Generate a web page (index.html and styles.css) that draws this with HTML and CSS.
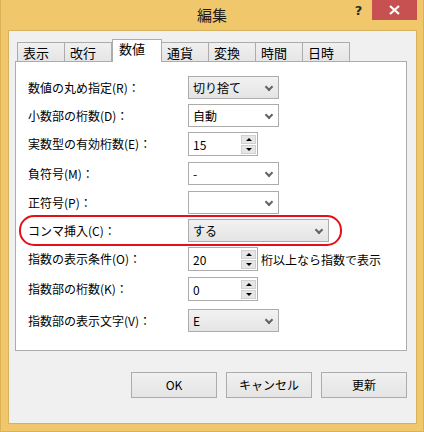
FILE: index.html
```html
<!DOCTYPE html>
<html>
<head>
    <title>編集</title>
    <link rel="stylesheet" href="styles.css">
</head>
<body>
    <div class="window">
        <div class="titlebar">
            <div></div>
            <div class="title">編集</div>
            <div class="caption-buttons">
                <div class="help">?</div>
                <div class="close">
                    <svg width="11" height="10" viewBox="0 0 11 10"><path d="M1 1 L10 9 M10 1 L1 9" stroke="#fff" stroke-width="2.2" fill="none"/></svg>
                </div>
            </div>
        </div>
        <div class="client">
            <div class="tabs">
                <div class="tab first">表示</div>
                <div class="tab">改行</div>
                <div class="tab selected">数値</div>
                <div class="tab">通貨</div>
                <div class="tab">変換</div>
                <div class="tab">時間</div>
                <div class="tab">日時</div>
            </div>
            <div class="panel">
                <div class="form">
                    <div class="label">数値の丸め指定(R)：</div>
                    <div class="combo gray">切り捨て<span class="chevron"></span></div>

                    <div class="label">小数部の桁数(D)：</div>
                    <div class="combo">自動<span class="chevron"></span></div>

                    <div class="label tall">実数型の有効桁数(E)：</div>
                    <div class="spin"><span class="value">15</span><span class="spin-btns"><span class="up"></span><span class="down"></span></span></div>

                    <div class="label">負符号(M)：</div>
                    <div class="combo">-<span class="chevron"></span></div>

                    <div class="label">正符号(P)：</div>
                    <div class="combo"><span class="chevron"></span></div>

                    <div class="label">コンマ挿入(C)：</div>
                    <div class="cell-mark">
                        <div class="combo gray wide">する<span class="chevron"></span></div>
                        <div class="mark"></div>
                    </div>

                    <div class="label tall">指数の表示条件(O)：</div>
                    <div class="inline">
                        <div class="spin"><span class="value">20</span><span class="spin-btns"><span class="up"></span><span class="down"></span></span></div>
                        <span class="suffix">桁以上なら指数で表示</span>
                    </div>

                    <div class="label tall">指数部の桁数(K)：</div>
                    <div class="spin"><span class="value">0</span><span class="spin-btns"><span class="up"></span><span class="down"></span></span></div>

                    <div class="label">指数部の表示文字(V)：</div>
                    <div class="combo gray">E<span class="chevron"></span></div>
                </div>
            </div>
            <div class="buttons">
                <div class="button">OK</div>
                <div class="button">キャンセル</div>
                <div class="button">更新</div>
            </div>
        </div>
    </div>
</body>
</html>
```

FILE: styles.css
```css
body {
    margin: 0;
    padding: 0;
    font-family: "Noto Sans CJK JP", "Noto Sans", sans-serif;
    font-size: 12px;
    color: #000;
}
.window {
    width: 424px;
    height: 432px;
    box-sizing: border-box;
    background: #f0c86b;
    border: 1px solid #dcb153;
    border-top: none;
    display: flex;
    flex-direction: column;
}
.titlebar {
    height: 30px;
    display: grid;
    grid-template-columns: 1fr auto 1fr;
}
.title {
    font-size: 15px;
    line-height: 30px;
    color: #1a1a1a;
}
.caption-buttons {
    display: flex;
    justify-content: flex-end;
    align-items: flex-start;
    margin-right: 6px;
}
.help {
    width: 27px;
    height: 20px;
    text-align: center;
    font-family: "DejaVu Sans", sans-serif;
    font-weight: bold;
    font-size: 13px;
    line-height: 22px;
    color: #2b2b2b;
}
.close {
    width: 45px;
    height: 20px;
    background: #c75050;
    display: flex;
    align-items: center;
    justify-content: center;
}
.client {
    flex: 1;
    margin: 0 6px 7px 7px;
    background: #f0f0f0;
    border: 1px solid #d8b35e;
    padding: 8px 0 0 6px;
}
.tabs {
    display: flex;
    align-items: flex-end;
    margin-left: 2px;
    height: 22px;
}
.tab {
    width: 47px;
    height: 19px;
    box-sizing: border-box;
    border: 1px solid #acacac;
    border-bottom: none;
    border-left: none;
    background: linear-gradient(#f0f0f0, #e5e5e5);
    padding-left: 5px;
    line-height: 19px;
    font-size: 13px;
}
.tab.first {
    width: 48px;
    border-left: 1px solid #acacac;
}
.tab.selected {
    width: 50px;
    height: 23px;
    margin-bottom: -1px;
    background: #fff;
    border-left: 1px solid #acacac;
    position: relative;
    z-index: 1;
    line-height: 18px;
    padding-left: 6px;
}
.panel {
    width: 392px;
    height: 290px;
    box-sizing: border-box;
    background: #fff;
    border: 1px solid #acacac;
    padding: 14px 0 0 12px;
}
.form {
    display: grid;
    grid-template-columns: 160px auto;
    grid-template-rows: 28px 28px 30px 29px 28px 28px 30px 32px 23px;
    align-items: start;
}
.label {
    line-height: 23px;
}
.label.tall {
    line-height: 24px;
}
.combo {
    position: relative;
    width: 91px;
    height: 23px;
    box-sizing: border-box;
    border: 1px solid #acacac;
    background: #fff;
    padding-left: 4px;
    line-height: 21px;
}
.combo.gray {
    background: linear-gradient(#f2f2f2, #e4e4e4);
}
.combo.wide {
    width: 141px;
}
.chevron {
    position: absolute;
    right: 6px;
    top: 7px;
    width: 4px;
    height: 4px;
    border-right: 2px solid #636363;
    border-bottom: 2px solid #636363;
    transform: rotate(45deg);
}
.cell-mark {
    position: relative;
}
.mark {
    position: absolute;
    left: -169px;
    top: -4px;
    width: 323px;
    height: 31px;
    box-sizing: border-box;
    border: 2px solid #e3101a;
    border-radius: 15px;
}
.inline {
    display: flex;
    align-items: center;
}
.suffix {
    margin-left: 3px;
}
.spin {
    width: 70px;
    height: 24px;
    box-sizing: border-box;
    border: 1px solid #acacac;
    background: #fff;
    display: flex;
    justify-content: space-between;
    padding: 1px 1px 1px 4px;
}
.value {
    line-height: 21px;
}
.spin-btns {
    width: 15px;
    display: flex;
    flex-direction: column;
    gap: 1px;
    padding-top: 1px;
}
.spin-btns span {
    flex: 1;
    max-height: 9px;
    background: #e6e6e6;
    border: 1px solid #d0d0d0;
    display: flex;
    align-items: center;
    justify-content: center;
}
.up::after {
    content: "";
    border-left: 3px solid transparent;
    border-right: 3px solid transparent;
    border-bottom: 3px solid #000;
}
.down::after {
    content: "";
    border-left: 3px solid transparent;
    border-right: 3px solid transparent;
    border-top: 3px solid #000;
}
.buttons {
    width: 392px;
    display: flex;
    justify-content: flex-end;
    gap: 9px;
    margin-top: 21px;
}
.button {
    width: 86px;
    height: 26px;
    box-sizing: border-box;
    border: 1px solid #acacac;
    background: linear-gradient(#f0f0f0, #e5e5e5);
    text-align: center;
    line-height: 24px;
}
```
